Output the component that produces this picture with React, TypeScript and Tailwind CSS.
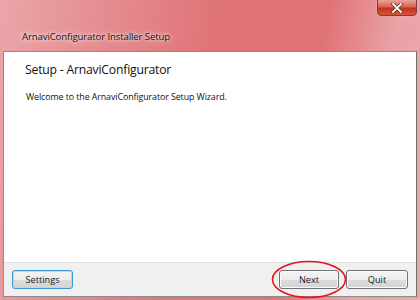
import React from "react";

export default function App() {
  return (
    <div
      className="relative w-[420px] h-[300px] overflow-hidden flex flex-col"
      style={{ fontFamily: '"Open Sans", "Noto Sans", sans-serif' }}
    >
      <div className="absolute inset-0 bg-[linear-gradient(100deg,#eaa6a9_0%,#e48a8e_25%,#e07579_45%,#e07378_70%,#eaa3a6_85%,#eba8ab_100%)]" />
      {/* title bar */}
      <div className="relative h-[51px] flex items-end pb-[7px] pl-[22px]">
        <span className="text-[9.6px] text-[#111] tracking-[-0.12px] [text-shadow:0_0_6px_rgba(255,255,255,0.9),0_0_3px_rgba(255,255,255,0.9)]">
          ArnaviConfigurator Installer Setup
        </span>
      </div>
      {/* close button */}
      <div className="absolute right-[3px] top-[-1px] w-[40px] h-[17px] rounded-b-[4px] border border-[#8a3a36] bg-[linear-gradient(180deg,#e8a49a_0%,#d8624f_45%,#c2351c_55%,#d5533a_100%)] flex items-center justify-center shadow-[0_0_1px_rgba(255,255,255,0.8)]">
        <svg width="12" height="10" viewBox="0 0 12 10">
          <path d="M2 1 L10 9 M10 1 L2 9" stroke="#5a2a24" strokeWidth="3.2" strokeLinecap="square" />
          <path d="M2 1 L10 9 M10 1 L2 9" stroke="#ffffff" strokeWidth="1.8" strokeLinecap="square" />
        </svg>
      </div>
      {/* client area */}
      <div className="relative mx-[3px] mb-[3px] flex-1 flex flex-col border border-[#8c8c8c] border-r-[#6e6e6e] bg-white">
        <div className="flex-1 flex flex-col bg-white pl-[21px] pt-[9px]">
          <div className="text-[12.2px] text-[#111] leading-[18px] tracking-[-0.2px]">
            Setup - ArnaviConfigurator
          </div>
          <div className="mt-[12px] ml-[1px] text-[8.9px] leading-[12px] text-[#111] tracking-[-0.1px]">
            Welcome to the ArnaviConfigurator Setup Wizard.
          </div>
        </div>
        <div className="h-[34px] bg-[#f0f0f0] border-t border-[#e3e3e3] flex items-center px-[8px]">
          <button className="w-[61px] h-[19px] rounded-[3px] border border-[#3c98d8] bg-[linear-gradient(180deg,#f4f4f4_0%,#ececec_50%,#dcdcdc_51%,#d4d4d4_100%)] text-[9.2px] text-[#1a1a1a] shadow-[inset_0_0_0_1px_#aedcf6] flex items-center justify-center">
            Settings
          </button>
          <div className="flex-1" />
          <div className="relative">
            <button className="w-[60px] h-[19px] rounded-[3px] border border-[#707070] bg-[linear-gradient(180deg,#f4f4f4_0%,#ececec_50%,#dcdcdc_51%,#d4d4d4_100%)] text-[9.2px] text-[#1a1a1a] shadow-[inset_0_0_0_1px_#fbfbfb] flex items-center justify-center">
              Next
            </button>
            <svg
              className="absolute left-[-8px] top-[-10px]"
              width="76"
              height="39"
              viewBox="0 0 76 39"
            >
              <ellipse cx="38" cy="19.5" rx="36.5" ry="18" fill="none" stroke="#e3151a" strokeWidth="1.6" />
            </svg>
          </div>
          <button className="ml-[7px] w-[62px] h-[19px] rounded-[3px] border border-[#707070] bg-[linear-gradient(180deg,#f4f4f4_0%,#ececec_50%,#dcdcdc_51%,#d4d4d4_100%)] text-[9.2px] text-[#1a1a1a] shadow-[inset_0_0_0_1px_#fbfbfb] flex items-center justify-center">
            Quit
          </button>
        </div>
      </div>
    </div>
  );
}
